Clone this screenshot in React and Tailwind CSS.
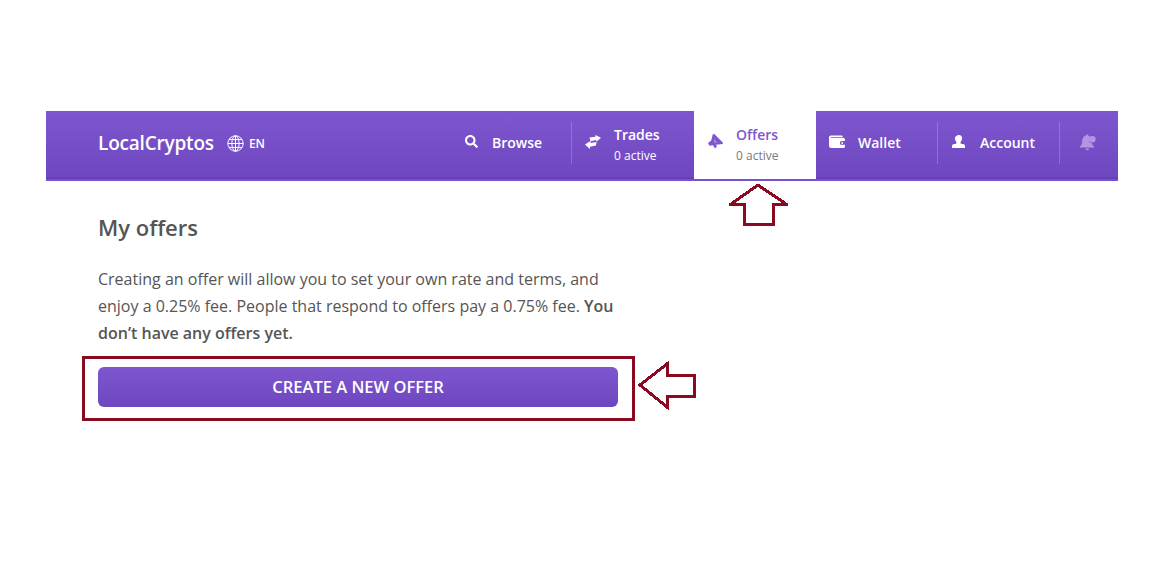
import { FaSearch } from 'react-icons/fa'

const FONT = { fontFamily: '"Open Sans", sans-serif' }

function Globe() {
  return (
    <svg width="17" height="17" viewBox="0 0 17 17" fill="none" stroke="currentColor" strokeWidth="1">
      <circle cx="8.5" cy="8.5" r="7.7" />
      <ellipse cx="8.5" cy="8.5" rx="3.6" ry="7.7" />
      <path d="M8.5 .8v15.4M.8 8.5h15.4M2 4.6h13M2 12.4h13" />
    </svg>
  )
}

function TradeIcon() {
  return (
    <svg width="16" height="14" viewBox="0 0 16 14" fill="currentColor">
      <path d="M4.500 2.500 10.500 1.800 10.200 0 16 2.800 11.500 6.800 11.200 5 5.500 6.200z" />
      <path d="M11.500 7 5.500 8 5.800 5.800 0 9.500 4.800 14 5 11.800 11 10.500z" />
    </svg>
  )
}

function HornIcon() {
  return (
    <svg width="15" height="15" viewBox="0 0 15 15" fill="currentColor">
      <path d="M4.800 0.300 6.300 0 15 8.800 14.600 10 8 10.800 9 12.800 6.800 14.200 5 11.200 1.500 11.800 0 8.900 3.200 6.500z" />
      <path d="M6 8.200 9.500 8.900 6 5z" fill="#fff" opacity="0.35" />
    </svg>
  )
}

function WalletIcon() {
  return (
    <svg width="17" height="14" viewBox="0 0 17 14" fill="currentColor">
      <path d="M2 0h11.500a1 1 0 0 1 1 1v.6H2.200a.5.5 0 0 0 0 1H15A2 2 0 0 1 17 4.500V6h-3.500a2 2 0 0 0 0 4H17v1.500a2 2 0 0 1-2 2H2.500A2.500 2.500 0 0 1 0 11V2a2 2 0 0 1 2-2z" />
      <circle cx="14" cy="8" r="1" />
    </svg>
  )
}

function UserIcon() {
  return (
    <svg width="14" height="13" viewBox="0 0 14 13" fill="currentColor">
      <path d="M7 0c2 0 3.100 1.400 3.100 3.300 0 1.500-.7 2.900-1.600 3.600v1c0 .5 1 .8 2.300 1.200 1.400.4 2.200 1 2.200 1.700V13H0v-2.200c0-.7.800-1.300 2.200-1.700C3.500 8.700 4.500 8.400 4.500 7.900v-1c-.9-.7-1.600-2.100-1.600-3.600C2.900 1.400 5 0 7 0z" />
    </svg>
  )
}

function BellIcon() {
  return (
    <svg width="16" height="17" viewBox="0 0 16 17" fill="#b197e3">
      <path d="M6.500 0h1v1.300C9 1.600 9.900 2.500 10.300 3.800 9.500 4.300 9 5.200 9 6.300c0 1.700 1.400 3 3 3 .3 1.300.9 2.300 2 3.200V13.500H0v-1c1.500-1.200 2.200-3 2.200-5.200C2.200 4 3.800 1.800 6.500 1.300z" />
      <path d="M5.400 14.500h3.600a1.800 1.800 0 0 1-3.600 0z" />
      <circle cx="12.300" cy="5.300" r="3.300" />
    </svg>
  )
}

function NavItem({ icon, label, sub, active, divider }) {
  return (
    <div className={`relative w-[122px] h-full flex items-center pl-[13px] ${active ? 'bg-white text-[#7f57cf]' : 'text-white'}`}>
      <div className="w-[16px] flex justify-center mr-[13px] mb-[7px]">{icon}</div>
      <div className={`font-semibold text-[14px] leading-[20px] ${sub ? '' : 'mb-[4px]'}`}>
        <div>{label}</div>
        {sub && <div className={`text-[12px] font-normal mt-[1px] ${active ? 'text-[#7a7a7a]' : ''}`}>{sub}</div>}
      </div>
      {divider && <div className="absolute right-0 top-[11px] bottom-[15px] w-px bg-white/20" />}
    </div>
  )
}

// outline arrow annotation
function Arrow({ points, w, h, className }) {
  return (
    <svg width={w} height={h} viewBox={`0 0 ${w} ${h}`} className={className} shapeRendering="crispEdges">
      <polygon points={points} fill="#fff" stroke="#8a0a22" strokeWidth="3" />
    </svg>
  )
}

export default function App() {
  return (
    <div className="relative w-[1164px] h-[567px] bg-white overflow-hidden pt-[111px] px-[46px]" style={FONT}>
      {/* Header */}
      <div className="h-[70px] flex justify-between pl-[52px] border-b-2 border-[#7850c9] bg-gradient-to-b from-[#7e56ce] to-[#6e47c0] shadow-[inset_0_-2px_0_#653fb5]">
        <div className="flex items-center text-white pb-[4px]">
          <div className="text-[19px] font-semibold tracking-[-0.2px]">LocalCryptos</div>
          <div className="ml-[13px]"><Globe /></div>
          <div className="ml-[5px] mt-[2px] text-[12px] font-semibold">EN</div>
        </div>
        <div className="flex">
          <NavItem icon={<FaSearch size={13} />} label="Browse" divider />
          <NavItem icon={<TradeIcon />} label="Trades" sub="0 active" />
          <NavItem icon={<HornIcon />} label="Offers" sub="0 active" active />
          <NavItem icon={<WalletIcon />} label="Wallet" divider />
          <NavItem icon={<UserIcon />} label="Account" divider />
          <div className="w-[58px] flex items-center pl-[20px] pb-[5px]">
            <BellIcon />
          </div>
        </div>
      </div>

      {/* Content */}
      <div className="w-[520px] ml-[52px] text-[#555]">
        <h1 className="mt-[29px] text-[22px] leading-[34px] font-semibold">My offers</h1>
        <p className="mt-[22px] text-[16px] leading-[27px]">
          Creating an offer will allow you to set your own rate and terms, and enjoy a 0.25% fee. People that respond to offers pay a 0.75% fee. <b className="font-semibold">You don’t have any offers yet.</b>
        </p>
        <button className="mt-[20px] w-full h-[40px] rounded-[6px] text-white text-[16.5px] font-semibold bg-gradient-to-b from-[#7e56ce] to-[#6e47c0]">
          CREATE A NEW OFFER
        </button>
      </div>

      {/* Annotations */}
      <div className="absolute left-[82px] top-[356px] w-[553px] h-[65px] border-[3px] border-[#8a0a22]" />
      <Arrow className="absolute left-[729px] top-[183px]" w={59} h={44} points="29,2 57,21 44,21 44,41.500 15,41.500 15,21 2,21" />
      <Arrow className="absolute left-[638px] top-[361px]" w={59} h={49} points="2,24 29,3 29,14.500 56,14.500 56,35 29,35 29,46" />
    </div>
  )
}
